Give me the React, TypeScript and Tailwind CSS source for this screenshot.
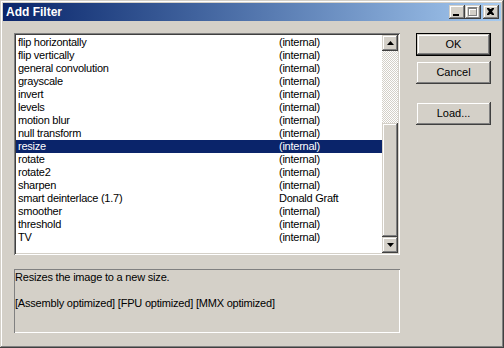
import React from 'react';

const filters: [string, string][] = [
  ['flip horizontally', '(internal)'],
  ['flip vertically', '(internal)'],
  ['general convolution', '(internal)'],
  ['grayscale', '(internal)'],
  ['invert', '(internal)'],
  ['levels', '(internal)'],
  ['motion blur', '(internal)'],
  ['null transform', '(internal)'],
  ['resize', '(internal)'],
  ['rotate', '(internal)'],
  ['rotate2', '(internal)'],
  ['sharpen', '(internal)'],
  ['smart deinterlace (1.7)', 'Donald Graft'],
  ['smoother', '(internal)'],
  ['threshold', '(internal)'],
  ['TV', '(internal)'],
];

const raised =
  'bg-[#d4d0c8] shadow-[inset_-1px_-1px_#404040,inset_1px_1px_#d4d0c8,inset_-2px_-2px_#808080,inset_2px_2px_#ffffff]';

const CaptionButton: React.FC<{ children: React.ReactNode }> = ({ children }) => (
  <div className={`w-[16px] h-[14px] flex items-center justify-center ${raised}`}>{children}</div>
);

const ScrollButton: React.FC<{ up?: boolean }> = ({ up }) => (
  <div className={`w-[16px] h-[16px] flex items-center justify-center ${raised}`}>
    <svg width="7" height="4" viewBox="0 0 7 4">
      {up ? <polygon points="3.5,0 7,4 0,4" fill="#000" /> : <polygon points="0,0 7,0 3.5,4" fill="#000" />}
    </svg>
  </div>
);

const DialogButton: React.FC<{ label: string; isDefault?: boolean; className?: string }> = ({ label, isDefault, className }) => (
  <div className={`w-[75px] h-[23px] ${isDefault ? 'border border-black' : ''} ${className ?? ''}`}>
    <div className={`w-full h-full flex items-center justify-center text-[11px] text-black ${raised}`}>{label}</div>
  </div>
);

export default function App() {
  const selected = 8;
  return (
    <div
      className="w-[504px] h-[348px] bg-[#d4d0c8] p-[3px] flex flex-col shadow-[inset_-1px_-1px_#404040,inset_1px_1px_#d4d0c8,inset_-2px_-2px_#808080,inset_2px_2px_#ffffff] select-none"
      style={{ fontFamily: '"Liberation Sans", Arial, sans-serif' }}
    >
      {/* title bar */}
      <div className="h-[18px] flex items-center pl-[3px] pr-[2px] bg-gradient-to-r from-[#0a246a] to-[#a6caf0]">
        <span className="text-white font-bold text-[12px] leading-none flex-1">Add Filter</span>
        <CaptionButton>
          <svg width="16" height="14" viewBox="0 0 16 14">
            <rect x="4" y="9" width="6" height="2" fill="#000" />
          </svg>
        </CaptionButton>
        <CaptionButton>
          <svg width="16" height="14" viewBox="0 0 16 14">
            <path d="M4 3h9v9h-9z M5 5v6h7v-6z" fill="#ffffff" fillRule="evenodd" />
            <path d="M3 2h9v9h-9z M4 4v6h7v-6z" fill="#808080" fillRule="evenodd" />
          </svg>
        </CaptionButton>
        <div className="ml-[2px]">
          <CaptionButton>
            <svg width="16" height="14" viewBox="0 0 16 14">
              <path d="M4 3h2l1 1h1l1-1h2v1l-2 2.5 2 2.5v1h-2l-1-1h-1l-1 1h-2v-1l2-2.5-2-2.5z" fill="#000" />
            </svg>
          </CaptionButton>
        </div>
      </div>

      {/* body */}
      <div className="flex pl-[11px] pt-[12px]">
        <div className="flex flex-col w-[386px]">
          {/* list box */}
          <div className="h-[222px] bg-white flex shadow-[inset_1px_1px_#808080,inset_-1px_-1px_#ffffff,inset_2px_2px_#404040,inset_-2px_-2px_#d4d0c8] p-[2px]">
            <div className="flex-1 pt-[1px] text-[11px] leading-[13px] tracking-[-0.25px] text-black">
              {filters.map(([name, author], i) => (
                <div
                  key={name}
                  className={`h-[13px] flex pl-[2px] whitespace-nowrap ${i === selected ? 'bg-[#0a246a] text-white' : ''}`}
                >
                  <span className="w-[261px]">{name}</span>
                  <span>{author}</span>
                </div>
              ))}
            </div>
            <div className="w-[16px] flex flex-col">
              <ScrollButton up />
              <div className="h-[72px] bg-[repeating-conic-gradient(#d4d0c8_0_25%,#ffffff_0_50%)] bg-[length:2px_2px]" />
              <div className={`h-[114px] ${raised}`} />
              <ScrollButton />
            </div>
          </div>

          {/* description */}
          <div className="mt-[14px] h-[64px] px-[1px] pt-[2px] text-[11px] leading-[13px] tracking-[-0.2px] text-black shadow-[inset_1px_1px_#808080,inset_-1px_-1px_#ffffff]">
            <div>Resizes the image to a new size.</div>
            <div className="h-[13px]" />
            <div>[Assembly optimized] [FPU optimized] [MMX optimized]</div>
          </div>
        </div>

        <div className="ml-[16px] flex flex-col">
          <DialogButton label="OK" isDefault />
          <DialogButton label="Cancel" className="mt-[5px]" />
          <DialogButton label="Load..." className="mt-[18px]" />
        </div>
      </div>
    </div>
  );
}
